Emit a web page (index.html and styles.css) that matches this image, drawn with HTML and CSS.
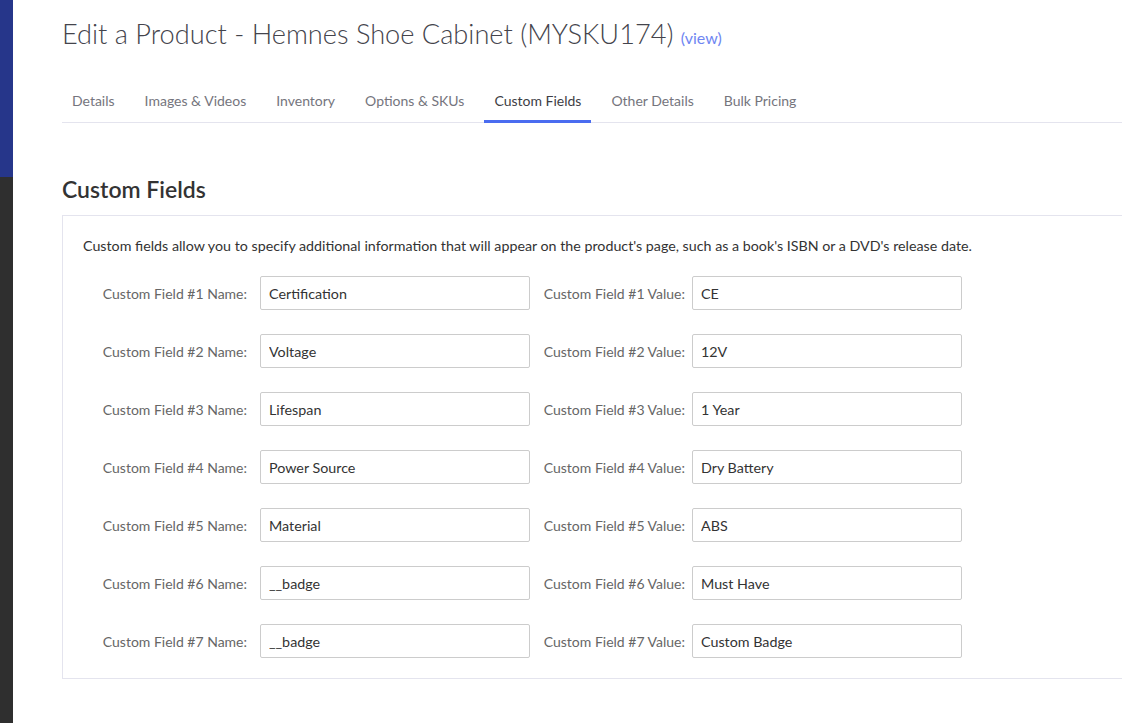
FILE: index.html
```html
<!DOCTYPE html>
<html lang="en">
<head>
<meta charset="utf-8">
<title>Edit a Product</title>
<link rel="stylesheet" href="styles.css">
</head>
<body>
<div class="app">
  <aside class="sidebar"><div class="sidebar-top"></div><div class="sidebar-bottom"></div></aside>
  <main class="main">
    <h1 class="title">Edit a Product - Hemnes Shoe Cabinet (MYSKU174) <a class="view-link" href="#">(view)</a></h1>
    <nav class="tabs">
      <a class="tab" href="#">Details</a>
      <a class="tab" href="#">Images &amp; Videos</a>
      <a class="tab" href="#">Inventory</a>
      <a class="tab" href="#">Options &amp; SKUs</a>
      <a class="tab active" href="#">Custom Fields</a>
      <a class="tab" href="#">Other Details</a>
      <a class="tab" href="#">Bulk Pricing</a>
    </nav>
    <h2 class="section-title">Custom Fields</h2>
    <section class="panel">
      <p class="desc">Custom fields allow you to specify additional information that will appear on the product's page, such as a book's ISBN or a DVD's release date.</p>
      <div class="rows">
        <div class="row"><label class="lbl">Custom Field #1 Name:</label><input class="field" value="Certification"><label class="lbl lbl-val">Custom Field #1 Value:</label><input class="field" value="CE"></div>
        <div class="row"><label class="lbl">Custom Field #2 Name:</label><input class="field" value="Voltage"><label class="lbl lbl-val">Custom Field #2 Value:</label><input class="field" value="12V"></div>
        <div class="row"><label class="lbl">Custom Field #3 Name:</label><input class="field" value="Lifespan"><label class="lbl lbl-val">Custom Field #3 Value:</label><input class="field" value="1 Year"></div>
        <div class="row"><label class="lbl">Custom Field #4 Name:</label><input class="field" value="Power Source"><label class="lbl lbl-val">Custom Field #4 Value:</label><input class="field" value="Dry Battery"></div>
        <div class="row"><label class="lbl">Custom Field #5 Name:</label><input class="field" value="Material"><label class="lbl lbl-val">Custom Field #5 Value:</label><input class="field" value="ABS"></div>
        <div class="row"><label class="lbl">Custom Field #6 Name:</label><input class="field" value="__badge"><label class="lbl lbl-val">Custom Field #6 Value:</label><input class="field" value="Must Have"></div>
        <div class="row"><label class="lbl">Custom Field #7 Name:</label><input class="field" value="__badge"><label class="lbl lbl-val">Custom Field #7 Value:</label><input class="field" value="Custom Badge"></div>
      </div>
    </section>
  </main>
</div>
</body>
</html>
```

FILE: styles.css
```css
* { box-sizing: border-box; }
html, body { margin: 0; padding: 0; }
body {
  font-family: "Lato", "Open Sans", sans-serif;
  color: #333;
  background: #fff;
  overflow: hidden;
}
.app { display: flex; min-height: 723px; }
.sidebar { width: 13px; flex: 0 0 13px; display: flex; flex-direction: column; }
.sidebar-top { height: 177px; background: #26368a; }
.sidebar-bottom { flex: 1; background: #2f2f2f; }
.main { flex: 1; padding-left: 49px; min-width: 0; }
.title {
  margin: 0;
  padding-top: 16px;
  height: 62px;
  font-size: 27.2px;
  font-weight: 300;
  color: #44444c;
  line-height: 36px;
  white-space: nowrap;
}
.view-link { font-size: 16px; color: #6f86f2; text-decoration: none; font-weight: 400; }
.tabs {
  display: flex;
  border-bottom: 1px solid #e4e4ee;
  margin-top: 23px;
}
.tab {
  display: block;
  padding: 0 10px;
  margin-right: 10px;
  height: 38px;
  line-height: 32px;
  font-size: 14px;
  color: #75757d;
  text-decoration: none;
  border-bottom: 3px solid transparent;
  margin-bottom: -1px;
}
.tab.active { color: #3d3d45; border-bottom-color: #4a6cf0; }
.section-title {
  margin: 52px 0 0;
  font-size: 23px;
  font-weight: 600;
  color: #333;
  line-height: 28px;
  height: 40px;
}
.panel {
  border: 1px solid #e4e4ee;
  border-right: 0;
  padding: 20px 0 20px 20px;
}
.desc { margin: 0 0 20px; font-size: 14.25px; line-height: 20px; color: #333; white-space: nowrap; }
.rows { display: flex; flex-direction: column; gap: 24px; }
.row { display: flex; align-items: center; height: 34px; }
.lbl {
  width: 164px;
  text-align: right;
  font-size: 14px;
  color: #666;
  margin-right: 13px;
  white-space: nowrap;
}
.lbl-val { width: 142px; margin-left: 13px; margin-right: 7px; }
.field {
  width: 270px;
  height: 34px;
  border: 1px solid #ccc;
  border-radius: 2px;
  padding: 0 8px;
  font-family: inherit;
  font-size: 14.3px;
  color: #333;
  background: #fff;
  outline: none;
}
```
